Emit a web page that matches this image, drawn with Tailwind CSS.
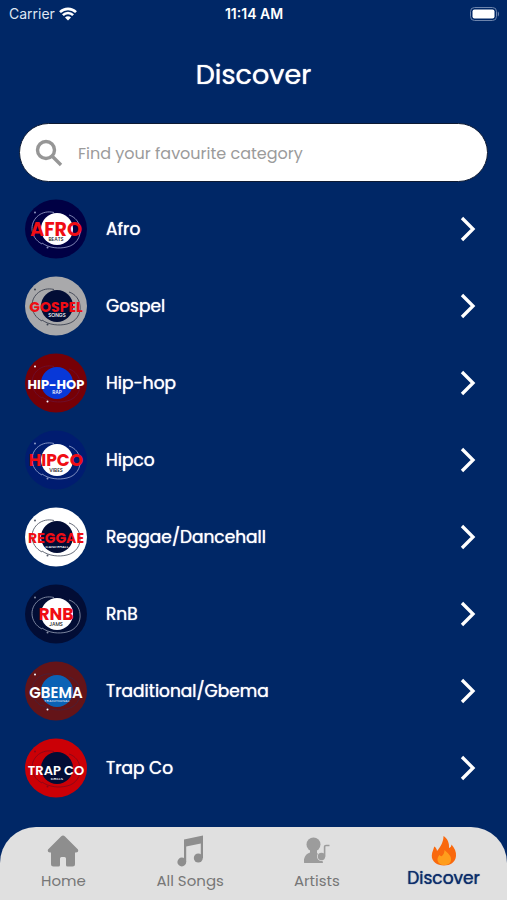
<!DOCTYPE html>
<html lang="en">
<head>
<meta charset="utf-8">
<meta name="viewport" content="width=device-width, initial-scale=1">
<title>Discover</title>
<script src="https://cdn.jsdelivr.net/npm/@tailwindcss/browser@4"></script>
</head>
<body class="flex min-h-screen flex-col bg-[#002766] font-['Poppins','Inter',sans-serif] text-white">
<svg class="hidden" aria-hidden="true">
  <symbol id="rings" viewBox="0 0 62 60">
    <g fill="none" stroke="currentColor" stroke-width=".9"><path d="M29 13.500C17 10.500 7 19 7 29.500C7 36 11 42 17 45"/><path d="M17 44C24 49 34 50 42 48C51 46 56 38 55 30C54.500 23 50 18 44 16"/></g>
    <circle cx="10" cy="13.500" r="1" fill="currentColor"/><circle cx="22.500" cy="48.500" r="1" fill="currentColor"/>
  </symbol>
  <symbol id="chevron" viewBox="0 0 16 26"><path d="M2 2l11 11L2 24" fill="none" stroke="currentColor" stroke-width="3.300"/></symbol>
</svg>

<header>
  <div class="flex h-7 items-center justify-between pr-2 pl-[9px] font-['Inter',sans-serif] text-sm">
    <div class="flex flex-1 items-center gap-1 text-[#dfe6f2]">
      <span>Carrier</span>
      <svg class="h-[14px] w-[18px]" viewBox="0 0 18 14" fill="none" stroke="#fff" stroke-width="2.600" aria-label="Wi-Fi"><path d="M1 5.200C5.500.7 12.500.7 17 5.200M3.900 8.200C6.800 5.300 11.200 5.300 14.100 8.200"/><path d="M9 13.500L6 10.500C7.700 8.900 10.300 8.900 12 10.500Z" fill="#fff" stroke="none"/></svg>
    </div>
    <span class="font-semibold">11:14 AM</span>
    <div class="flex flex-1 justify-end">
      <svg class="h-[14px] w-[29px]" viewBox="0 0 29 14" aria-label="Battery full"><rect x=".5" y=".5" width="26" height="13" rx="4" fill="none" stroke="#6d84ac"/><rect x="2.500" y="2.500" width="22" height="9" rx="2" fill="#fff"/><path d="M27.800 4.500c1.600.5 1.600 4.500 0 5z" fill="#6d84ac"/></svg>
    </div>
  </div>
  <h1 class="pt-[27px] text-center text-[27px] leading-10 [text-shadow:0_0_1px_currentColor]">Discover</h1>
  <label class="mx-[19px] mt-7 flex h-[59px] items-center gap-[15px] rounded-full border border-[#0d1a33] bg-white pr-6 pl-[15px]">
    <svg class="size-7 shrink-0 text-[#969696]" viewBox="0 0 28 28" fill="none" stroke="currentColor" stroke-width="3.400" aria-hidden="true"><circle cx="11" cy="11" r="8.500"/><path d="M17 17l9 9"/></svg>
    <input type="search" aria-label="Search categories" placeholder="Find your favourite category" class="min-w-0 flex-1 bg-transparent pt-[2px] text-base text-gray-800 outline-none placeholder:text-[#9b9b9b]">
  </label>
</header>

<main class="flex-1 pt-2 pb-5">
  <ul class="text-[17px] [text-shadow:0_0_1px_currentColor]">
    <li><a href="#afro" class="flex h-[77px] items-center pr-[31px] pl-[25px]">
      <svg class="mr-[19px] h-[60px] w-[62px] shrink-0 [text-shadow:none]" viewBox="0 0 62 60" text-anchor="middle" font-weight="700"><ellipse cx="31" cy="30" rx="31" ry="29.500" fill="#000044"/><circle cx="32" cy="30" r="16" fill="#fff"/><use href="#rings" class="text-[#8c93c0]"/><text x="31" y="37" font-size="19" fill="#f00d14">AFRO</text><text x="31" y="42" font-size="5" font-weight="500" fill="#222">BEATS</text></svg>
      <span class="flex-1 pt-[2px]">Afro</span><svg class="h-[26px] w-4"><use href="#chevron"/></svg></a></li>
    <li><a href="#gospel" class="flex h-[77px] items-center pr-[31px] pl-[25px]">
      <svg class="mr-[19px] h-[60px] w-[62px] shrink-0 [text-shadow:none]" viewBox="0 0 62 60" text-anchor="middle" font-weight="700"><ellipse cx="31" cy="30" rx="31" ry="29.500" fill="#a9a9ab"/><circle cx="32" cy="30" r="16" fill="#020d35"/><use href="#rings" class="text-[#3c4250]"/><text x="31" y="36" font-size="14" fill="#f00d14">GOSPEL</text><text x="32" y="41" font-size="5" font-weight="500" fill="#fff">SONGS</text></svg>
      <span class="flex-1 pt-[2px]">Gospel</span><svg class="h-[26px] w-4"><use href="#chevron"/></svg></a></li>
    <li><a href="#hip-hop" class="flex h-[77px] items-center pr-[31px] pl-[25px]">
      <svg class="mr-[19px] h-[60px] w-[62px] shrink-0 [text-shadow:none]" viewBox="0 0 62 60" text-anchor="middle" font-weight="700"><ellipse cx="31" cy="30" rx="31" ry="29.500" fill="#760006"/><circle cx="32" cy="30" r="16" fill="#0838d8"/><use href="#rings" class="text-[#6c1030]"/><circle cx="10" cy="13.500" r="1" fill="#fff"/><circle cx="22.500" cy="48.500" r="1" fill="#fff"/><text x="31" y="36" font-size="13" fill="#fff">HIP-HOP</text><text x="32" y="41" font-size="5" font-weight="500" fill="#fff">RAP</text></svg>
      <span class="flex-1 pt-[2px]">Hip-hop</span><svg class="h-[26px] w-4"><use href="#chevron"/></svg></a></li>
    <li><a href="#hipco" class="flex h-[77px] items-center pr-[31px] pl-[25px]">
      <svg class="mr-[19px] h-[60px] w-[62px] shrink-0 [text-shadow:none]" viewBox="0 0 62 60" text-anchor="middle" font-weight="700"><ellipse cx="31" cy="30" rx="31" ry="29.500" fill="#001c70"/><circle cx="32" cy="30" r="16" fill="#fff"/><use href="#rings" class="text-[#8c9bc8]"/><text x="31" y="36" font-size="17" fill="#f00d14">HIPCO</text><text x="31" y="42" font-size="5" font-weight="500" fill="#222">VIBES</text></svg>
      <span class="flex-1 pt-[2px]">Hipco</span><svg class="h-[26px] w-4"><use href="#chevron"/></svg></a></li>
    <li><a href="#reggae" class="flex h-[77px] items-center pr-[31px] pl-[25px]">
      <svg class="mr-[19px] h-[60px] w-[62px] shrink-0 [text-shadow:none]" viewBox="0 0 62 60" text-anchor="middle" font-weight="700"><ellipse cx="31" cy="30" rx="31" ry="29.500" fill="#fff"/><circle cx="32" cy="30" r="16" fill="#020d35"/><use href="#rings" class="text-[#555b6a]"/><text x="31" y="36" font-size="14" fill="#f00d14">REGGAE</text><text x="32" y="41" font-size="4" font-weight="500" fill="#fff">DANCEHALL</text></svg>
      <span class="flex-1 pt-[2px]">Reggae/Dancehall</span><svg class="h-[26px] w-4"><use href="#chevron"/></svg></a></li>
    <li><a href="#rnb" class="flex h-[77px] items-center pr-[31px] pl-[25px]">
      <svg class="mr-[19px] h-[60px] w-[62px] shrink-0 [text-shadow:none]" viewBox="0 0 62 60" text-anchor="middle" font-weight="700"><ellipse cx="31" cy="30" rx="31" ry="29.500" fill="#020d35"/><circle cx="32" cy="30" r="16" fill="#fff"/><use href="#rings" class="text-[#8790a8]"/><text x="31" y="36" font-size="17" fill="#f00d14">RNB</text><text x="31" y="42" font-size="5" font-weight="500" fill="#222">JAMS</text></svg>
      <span class="flex-1 pt-[2px]">RnB</span><svg class="h-[26px] w-4"><use href="#chevron"/></svg></a></li>
    <li><a href="#gbema" class="flex h-[77px] items-center pr-[31px] pl-[25px]">
      <svg class="mr-[19px] h-[60px] w-[62px] shrink-0 [text-shadow:none]" viewBox="0 0 62 60" text-anchor="middle" font-weight="600"><ellipse cx="31" cy="30" rx="31" ry="29.500" fill="#641418"/><circle cx="32" cy="30" r="16" fill="#0b62b5"/><use href="#rings" class="text-[#4a2038]"/><circle cx="10" cy="13.500" r="1" fill="#fff"/><circle cx="22.500" cy="48.500" r="1" fill="#fff"/><text x="31" y="37" font-size="15" fill="#fff">GBEMA</text><text x="32" y="41" font-size="4" font-weight="500" fill="#c9dcf0">TRADITIONAL</text></svg>
      <span class="flex-1 pt-[2px]">Traditional/Gbema</span><svg class="h-[26px] w-4"><use href="#chevron"/></svg></a></li>
    <li><a href="#trap-co" class="flex h-[77px] items-center pr-[31px] pl-[25px]">
      <svg class="mr-[19px] h-[60px] w-[62px] shrink-0 [text-shadow:none]" viewBox="0 0 62 60" text-anchor="middle" font-weight="600"><ellipse cx="31" cy="30" rx="31" ry="29.500" fill="#cb0006"/><circle cx="32" cy="30" r="16" fill="#020d35"/><use href="#rings" class="text-[#870818]"/><text x="31" y="37" font-size="13" fill="#fff">TRAP CO</text><text x="32" y="42" font-size="4" font-weight="500" fill="#fff">DRILLS</text></svg>
      <span class="flex-1 pt-[2px]">Trap Co</span><svg class="h-[26px] w-4"><use href="#chevron"/></svg></a></li>
  </ul>
</main>

<nav class="grid h-[73px] grid-cols-4 rounded-t-[36px] bg-[#e0e0e0] pt-2 text-[15px] text-[#777]">
  <a href="#home" class="flex flex-col items-center">
    <svg class="h-8 w-[32px] text-[#8e8e8e]" viewBox="0 0 32 32" fill="currentColor" aria-hidden="true"><path d="M14 1.500Q16-.5 18 1.500L31 14.500Q32 17.500 29 17.500H28V29Q28 31.500 25.500 31.500H20.500Q19 31.500 19 30V23.500Q19 22 17.500 22H14.500Q13 22 13 23.500V30Q13 31.500 11.500 31.500H6.500Q4 31.500 4 29V17.500H3Q0 17.500 1 14.500Z"/></svg>
    <span class="mt-1 leading-5">Home</span></a>
  <a href="#songs" class="flex flex-col items-center">
    <svg class="h-8 w-[26px] text-[#8e8e8e]" viewBox="0 0 26 32" fill="currentColor" aria-hidden="true"><path d="M7 4.500L26 .5V23H23.800V8.500L9.200 11.500V27H7Z"/><circle cx="4.800" cy="27" r="4.400"/><circle cx="21.300" cy="23" r="4.500"/></svg>
    <span class="mt-1 leading-5">All Songs</span></a>
  <a href="#artists" class="flex flex-col items-center">
    <svg class="h-8 w-[26px] text-[#9c9c9c]" viewBox="0 0 26 32" fill="currentColor" aria-hidden="true"><circle cx="9.500" cy="9.500" r="7"/><path d="M6 14H13V18Q18 20 19 28H1Q-1 28-.2 25Q1 19 6 17.500Z"/><circle cx="17.500" cy="21.500" r="4.500" fill="#e0e0e0"/><circle cx="17.500" cy="21.500" r="3.700"/><path d="M20.600 21.500V11.500Q20.600 10.500 22 10.500H25.500" fill="none" stroke="currentColor" stroke-width="1.600"/></svg>
    <span class="mt-1 leading-5">Artists</span></a>
  <a href="#discover" aria-current="page" class="flex flex-col items-center text-[17px] text-[#0c2d6b] [text-shadow:0_0_1px_currentColor]">
    <svg class="h-8 w-[26px]" viewBox="0 0 26 32" aria-hidden="true"><path d="M12.500 1C16.500 3.500 18.500 8 18 13C19.500 12.500 20.500 11 20.500 9.500C23.500 13 25.500 17 25 21C24.500 27.500 19 30.500 13 30.500C6 30.500 .5 26.500 .8 20.500C1 16.500 2.800 14.500 3.200 11.500C5 12.500 5.800 14 6 16C9.500 12 12.500 7 12.500 1Z" fill="#f9690e"/><path d="M13.500 15C18 19 20.500 21.500 20 25C19.700 28.500 17 30 13.500 30C9.500 30 6.500 28 6.500 24.500C6.500 22.500 7.500 21 8.500 20C9.200 21 10 21.500 10.800 21C12.500 20 13.500 17.500 13.500 15Z" fill="#ff9d1c"/></svg>
    <span class="mt-px leading-5">Discover</span></a>
</nav>
</body>
</html>
